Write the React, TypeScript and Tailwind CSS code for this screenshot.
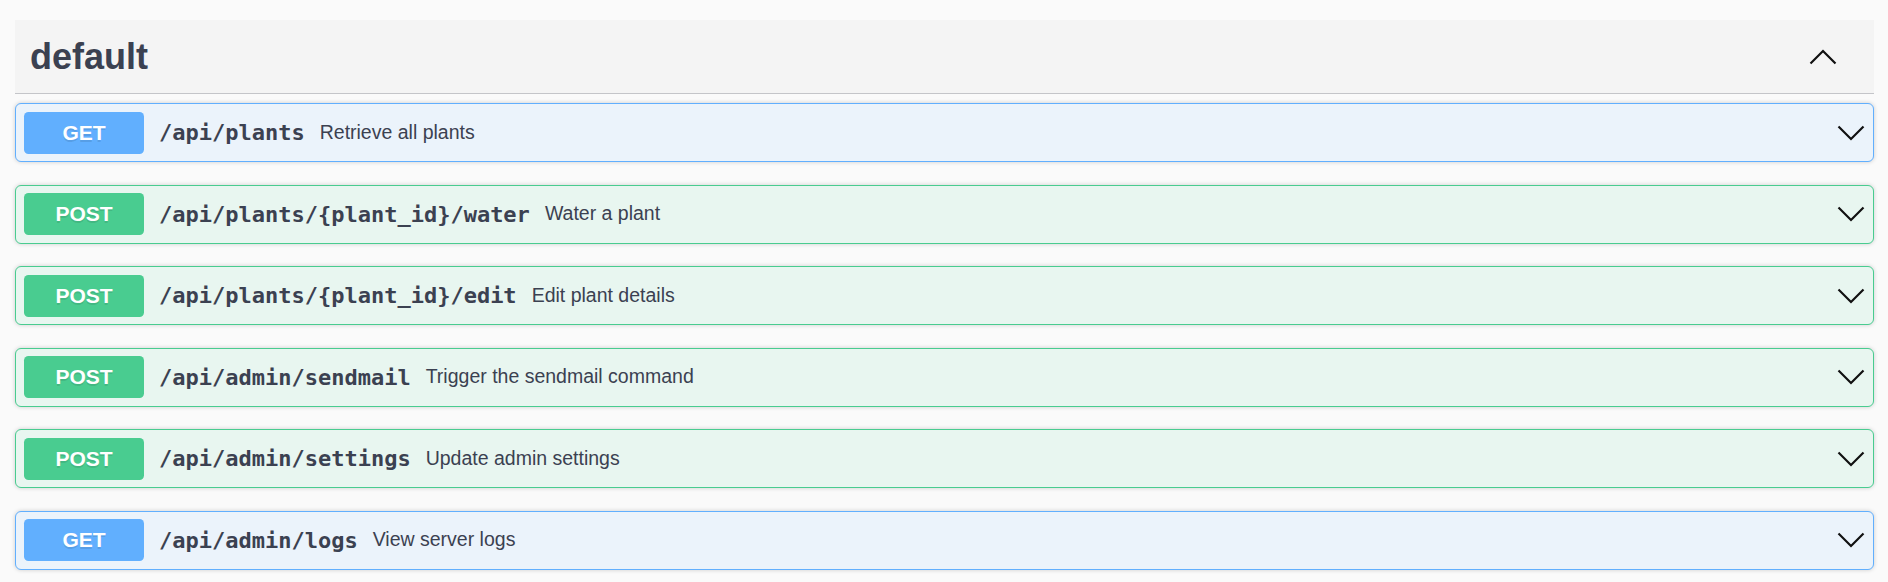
const ops = [
  { method: "GET", path: "/api/plants", desc: "Retrieve all plants" },
  { method: "POST", path: "/api/plants/{plant_id}/water", desc: "Water a plant" },
  { method: "POST", path: "/api/plants/{plant_id}/edit", desc: "Edit plant details" },
  { method: "POST", path: "/api/admin/sendmail", desc: "Trigger the sendmail command" },
  { method: "POST", path: "/api/admin/settings", desc: "Update admin settings" },
  { method: "GET", path: "/api/admin/logs", desc: "View server logs" },
]

function Chevron({ up }: { up?: boolean }) {
  return (
    <svg width="28" height="16" viewBox="0 0 28 16" fill="none">
      <polyline
        points={up ? "1.5,14.5 14,2 26.5,14.5" : "1.5,1.5 14,14 26.5,1.5"}
        stroke="#111"
        strokeWidth="2.2"
      />
    </svg>
  )
}

export default function App() {
  return (
    <div className="min-h-screen bg-[#fafafa] pl-[15px] pr-[14px] pt-[20px] text-[#3b4151] font-['Liberation_Sans',Arial,sans-serif]">
      {/* TAG HEADER */}
      <div className="flex items-center justify-between bg-[#f4f4f4] border-b border-[#c4c5c9] pl-[15px] pr-[37px] h-[74px] mb-[9px]">
        <h3 className="text-[36px] font-bold leading-none">default</h3>
        <Chevron up />
      </div>

      {/* OPERATIONS */}
      <div className="flex flex-col gap-[22.5px]">
        {ops.map((op, i) => {
          const isGet = op.method === "GET"
          return (
            <div
              key={i}
              className={`flex items-center h-[59px] pl-[8px] pr-[7px] rounded-[6px] border shadow-[0_0_4px_rgba(0,0,0,0.19)] ${
                isGet ? "bg-[#ebf3fb] border-[#61affe]" : "bg-[#e8f6f0] border-[#49cc90]"
              }`}
            >
              <div
                className={`w-[120px] h-[42px] rounded-[4.5px] flex items-center justify-center text-white text-[21px] font-bold [text-shadow:0_1.5px_0_rgba(0,0,0,0.1)] ${
                  isGet ? "bg-[#61affe]" : "bg-[#49cc90]"
                }`}
              >
                {op.method}
              </div>
              <span className="px-[15px] font-['DejaVu_Sans_Mono',monospace] font-bold text-[22px]">
                {op.path}
              </span>
              <span className="flex-1 text-[19.5px]">{op.desc}</span>
              <div className="pr-[1px]">
                <Chevron />
              </div>
            </div>
          )
        })}
      </div>
    </div>
  )
}
